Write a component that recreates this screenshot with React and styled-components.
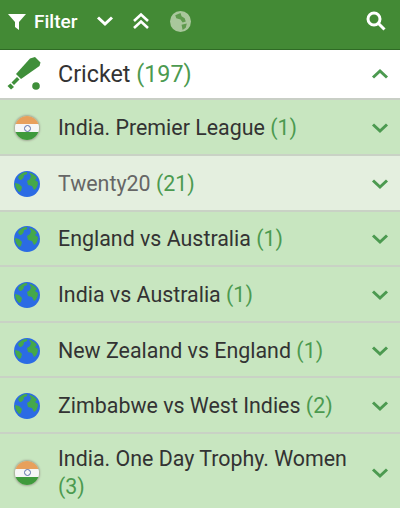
import React from 'react';
import styled, { createGlobalStyle } from 'styled-components';

const Global = createGlobalStyle`
    html, body { margin: 0; padding: 0; background: #c8e6c0; }
    * { box-sizing: border-box; }
`
const Page = styled.div`
    width: 400px;
    height: 508px;
    overflow: hidden;
    font-family: Roboto, "Liberation Sans", sans-serif;
`
const Toolbar = styled.div`
    display: flex;
    align-items: center;
    height: 50px;
    padding: 0 14px 7px 8px;
    background: #438a35;
    color: #fff;
    border-bottom: 1px solid #2f6b25;
`
const FilterLabel = styled.span`
    font-size: 19px;
    font-weight: 500;
    margin: 0 19px 0 8px;
`
const ToolIcon = styled.svg`
    display: block;
    flex: none;
    margin-right: ${p => p.$gap || 0}px;
`
const Spacer = styled.div`
    flex: 1;
`
const Head = styled.div`
    display: flex;
    align-items: center;
    height: 50.4px;
    padding: 0 11px 1px 6px;
    background: #fff;
    border-bottom: 2px solid #c9cfc6;
`
const HeadTitle = styled.div`
    flex: 1;
    margin-left: 16px;
    font-size: 23.3px;
    color: #333;
`
const Count = styled.span`
    color: #4c9a50;
`
const Row = styled.div`
    display: flex;
    align-items: center;
    height: ${p => p.$tall ? 78 : 55.6}px;
    padding: 2px 11px 0 14px;
    background: ${p => p.$dim ? '#e4efdf' : '#c8e6c0'};
    border-bottom: 2px solid #c9d2c5;
`
const Label = styled.div`
    flex: 1;
    margin: 0 10px 0 18px;
    font-size: 21.4px;
    line-height: 28px;
    color: ${p => p.$dim ? '#666' : '#333'};
`
const Flag = styled.div`
    width: 24px;
    height: 24px;
    margin: 0 1px;
    flex: none;
    border-radius: 50%;
    box-shadow: 0 0 2px 1px #a3a896;
    overflow: hidden;
    background: linear-gradient(#e8a05c 0 33%, #f6f6f6 33% 66%, #3f9a3c 66%);
    display: flex;
    align-items: center;
    justify-content: center;
`
const Wheel = styled.div`
    width: 7px;
    height: 7px;
    border-radius: 50%;
    border: 1px solid #5a6ea8;
`

const Chevron = ({ up, color = '#4c9a50', gap }) => (
    <ToolIcon $gap={gap} width="18" height="18" viewBox="0 0 18 18" fill="none">
        <path d={up ? 'M2 12.5l7-6.5 7 6.5' : 'M2 5.5l7 6.5 7-6.5'} stroke={color} strokeWidth="3" />
    </ToolIcon>
)

const Globe = () => (
    <ToolIcon width="26" height="26" viewBox="0 0 26 26">
        <circle cx="13" cy="13" r="13" fill="#2b6be4" />
        <path d="M4 6c2-3 5-5 9-5 1 2-1 3-3 3 0 2-1 4-3 5-1 0-2 0-3-3z" fill="#45a84a" />
        <path d="M15 2c3 0 6 2 8 5l-2 2 3 2c0 4-2 7-4 8l-2-4-4-1-1-4 3-2 1-3z" fill="#45a84a" />
        <path d="M1 12l4 1 3 3-1 4-2 1c-2-2-4-5-4-9z" fill="#45a84a" />
    </ToolIcon>
)

const India = () => (
    <Flag>
        <Wheel />
    </Flag>
)

const rows = [
    { icon: India, name: 'India. Premier League', n: 1 },
    { icon: Globe, name: 'Twenty20', n: 21, dim: true },
    { icon: Globe, name: 'England vs Australia', n: 1 },
    { icon: Globe, name: 'India vs Australia', n: 1 },
    { icon: Globe, name: 'New Zealand vs England', n: 1 },
    { icon: Globe, name: 'Zimbabwe vs West Indies', n: 2 },
    { icon: India, name: 'India. One Day Trophy. Women', n: 3, tall: true },
]

const App = function () {
    return (
        <Page>
            <Global />
            <Toolbar>
                <ToolIcon width="18" height="18" viewBox="0 0 18 18" fill="#fff">
                    <path d="M0 2h18l-7 8v8l-4-3v-5z" />
                </ToolIcon>
                <FilterLabel>Filter</FilterLabel>
                <Chevron color="#fff" gap={17} />
                <ToolIcon $gap={19} width="20" height="20" viewBox="0 0 20 20" fill="none" stroke="#fff" strokeWidth="2.6">
                    <path d="M3 10l7-6.5 7 6.5M3 17l7-6.5 7 6.5" />
                </ToolIcon>
                <ToolIcon width="21" height="21" viewBox="0 0 20 20">
                    <circle cx="10" cy="10" r="10" fill="#a9c79c" />
                    <path d="M5 4l5-2 1 3 3 2 1 3-3 1-2-3-4-1zM11 13l5-1-1 4-3 2z" fill="#5f9a4e" />
                </ToolIcon>
                <Spacer />
                <ToolIcon width="20" height="20" viewBox="0 0 20 20" fill="none" stroke="#fff" strokeWidth="3">
                    <circle cx="8" cy="8" r="6" />
                    <path d="M12.5 12.5L18.5 18.5" />
                </ToolIcon>
            </Toolbar>
            <Head>
                <ToolIcon width="36" height="36" viewBox="0 0 36 36" fill="#3f8f3a">
                    <path d="M29 1l5.500 5.500-1 3.500-18.500 13-5-5 14-15.500z" />
                    <path d="M11 21l2.500 2.500-5.500 5.500-2.500-2.500z" />
                    <path d="M4.500 27.500l3.500 3.500-3 2.500-3.500-3.500z" />
                    <circle cx="30" cy="30" r="3.800" />
                </ToolIcon>
                <HeadTitle>Cricket <Count>(197)</Count></HeadTitle>
                <Chevron up />
            </Head>
            {rows.map(r => (
                <Row key={r.name} $dim={r.dim} $tall={r.tall}>
                    <r.icon />
                    <Label $dim={r.dim}>{r.name} <Count>({r.n})</Count></Label>
                    <Chevron />
                </Row>
            ))}
        </Page>
    )
}

export default App
